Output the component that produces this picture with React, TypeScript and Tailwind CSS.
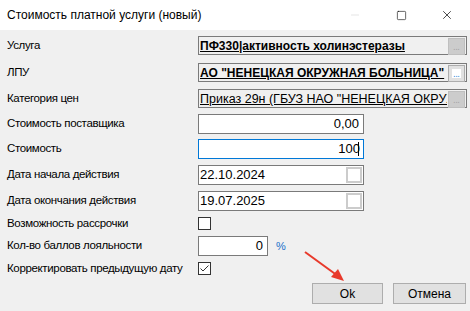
import { X, Square, Minus } from 'lucide-react';

const labelFont = { fontFamily: '"Liberation Sans", Arial, sans-serif' };
const fieldFont = { fontFamily: '"Liberation Sans", Arial, sans-serif' };

function Label({ text }: { text: string }) {
  return (
    <div className="w-[198px] shrink-0 pl-[7px] text-[11.5px] tracking-[-0.35px] text-black leading-none whitespace-nowrap" style={labelFont}>
      {text}
    </div>
  );
}

function EllipsisBtn({ enabled }: { enabled?: boolean }) {
  return (
    <div
      className={
        'absolute right-[1px] top-[1px] w-[17px] h-[17px] flex items-end justify-center pb-[3px] border ' +
        (enabled ? 'bg-[#e1e1e1] border-[#adadad]' : 'bg-[#cccccc] border-[#bfbfbf]')
      }
    >
      <div className={'w-[9px] h-[9px] flex items-end justify-center ' + (enabled ? 'bg-white' : 'bg-[#cccccc]')}>
        <span className={'text-[8px] leading-none ' + (enabled ? 'text-[#0078d7]' : 'text-[#a0a0a0]')}>...</span>
      </div>
    </div>
  );
}

function LookupRow({ label, value, bold, enabled, mt }: { label: string; value: string; bold?: boolean; enabled?: boolean; mt: string }) {
  return (
    <div className={'flex items-center ' + mt}>
      <Label text={label} />
      <div className="relative w-[269px] h-[19px] border border-[#7a7a7a] bg-[#f0f0f0]">
        <div className="absolute left-[1px] top-[1px] right-[19px] overflow-hidden">
          <div
            className={'whitespace-nowrap underline text-black leading-[16px] ' + (bold ? 'font-bold text-[12px]' : 'text-[12.5px]')}
            style={fieldFont}
          >
            {value}
          </div>
        </div>
        <EllipsisBtn enabled={enabled} />
      </div>
    </div>
  );
}

function DateRow({ label, value, mt }: { label: string; value: string; mt: string }) {
  return (
    <div className={'flex items-center ' + mt}>
      <Label text={label} />
      <div className="relative w-[166px] h-[20px] border border-[#7a7a7a] bg-white">
        <div className="pl-[1px] text-[13px] leading-[18px] text-black" style={fieldFont}>
          {value}
        </div>
        <div className="absolute right-[1px] top-[1px] w-[16px] h-[16px] border-2 border-[#cccccc] bg-white" />
      </div>
    </div>
  );
}

function Check({ checked }: { checked?: boolean }) {
  return (
    <div className="w-[13px] h-[13px] border border-[#333333] bg-white flex items-center justify-center">
      {checked && (
        <svg width="11" height="11" viewBox="0 0 11 11">
          <path d="M1.5 5.5 L4 8 L9.5 2.5" stroke="#333333" strokeWidth="1" fill="none" />
        </svg>
      )}
    </div>
  );
}

export default function App() {
  return (
    <div className="relative w-[470px] h-[311px] bg-[#f0f0f0] overflow-hidden">
      {/* Title bar */}
      <div className="h-[30px] bg-white flex items-center">
        <div className="flex-1 pl-[7px] text-[12px] text-black whitespace-nowrap" style={labelFont}>
          Стоимость платной услуги (новый)
        </div>
        <div className="w-[46px] flex justify-center text-[#c8c8c8]">
          <Minus size={12} strokeWidth={1} />
        </div>
        <div className="w-[46px] flex justify-center text-black">
          <Square size={11} strokeWidth={1.3} />
        </div>
        <div className="w-[46px] flex justify-center text-black">
          <X size={14} strokeWidth={1.2} />
        </div>
      </div>

      <div className="flex flex-col">
        <LookupRow mt="mt-[6px]" label="Услуга" value="ПФ330|активность холинэстеразы" bold />
        <LookupRow mt="mt-[8px]" label="ЛПУ" value={'АО "НЕНЕЦКАЯ ОКРУЖНАЯ БОЛЬНИЦА"'} bold enabled />
        <LookupRow mt="mt-[7px]" label="Категория цен" value={'Приказ 29н (ГБУЗ НАО "НЕНЕЦКАЯ ОКРУЖНАЯ БОЛЬНИЦА")'} />

        <div className="flex items-center mt-[6px]">
          <Label text="Стоимость поставщика" />
          <div className="w-[166px] h-[20px] border border-[#7a7a7a] bg-white text-right pr-[4px] text-[13px] leading-[18px]" style={fieldFont}>
            0,00
          </div>
        </div>
        <div className="flex items-center mt-[5px]">
          <Label text="Стоимость" />
          <div className="w-[166px] h-[20px] border border-[#0078d7] bg-white flex justify-end items-center pr-[4px] text-[13px] leading-[18px]" style={fieldFont}>
            <span>100</span>
            <span className="w-[1px] h-[14px] bg-black ml-[-2px]" />
          </div>
        </div>

        <DateRow mt="mt-[6px]" label="Дата начала действия" value="22.10.2024" />
        <DateRow mt="mt-[6px]" label="Дата окончания действия" value="19.07.2025" />

        <div className="flex items-center mt-[6px]">
          <Label text="Возможность рассрочки" />
          <Check />
        </div>
        <div className="flex items-center mt-[6px]">
          <Label text="Кол-во баллов лояльности" />
          <div className="w-[70px] h-[20px] border border-[#7a7a7a] bg-white text-right pr-[4px] text-[13px] leading-[18px]" style={fieldFont}>
            0
          </div>
          <span className="ml-[8px] text-[11px] text-[#1a6fc9]" style={labelFont}>%</span>
        </div>
        <div className="flex items-center mt-[6px]">
          <Label text="Корректировать предыдущую дату" />
          <Check checked />
        </div>

        <div className="flex justify-end gap-[10px] pr-[4px] mt-[8px]">
          <button className="w-[71px] h-[21px] border border-[#adadad] bg-[#e1e1e1] text-[12px] text-black" style={labelFont}>
            Ok
          </button>
          <button className="w-[73px] h-[21px] border border-[#adadad] bg-[#e1e1e1] text-[12px] text-black" style={labelFont}>
            Отмена
          </button>
        </div>
      </div>

      {/* red annotation arrow */}
      <svg className="absolute left-[300px] top-[248px]" width="50" height="36" viewBox="0 0 50 36">
        <line x1="5" y1="4" x2="38" y2="28" stroke="#e8392b" strokeWidth="2" />
        <polygon points="44,33 31,29 38,21" fill="#e8392b" />
      </svg>
    </div>
  );
}
